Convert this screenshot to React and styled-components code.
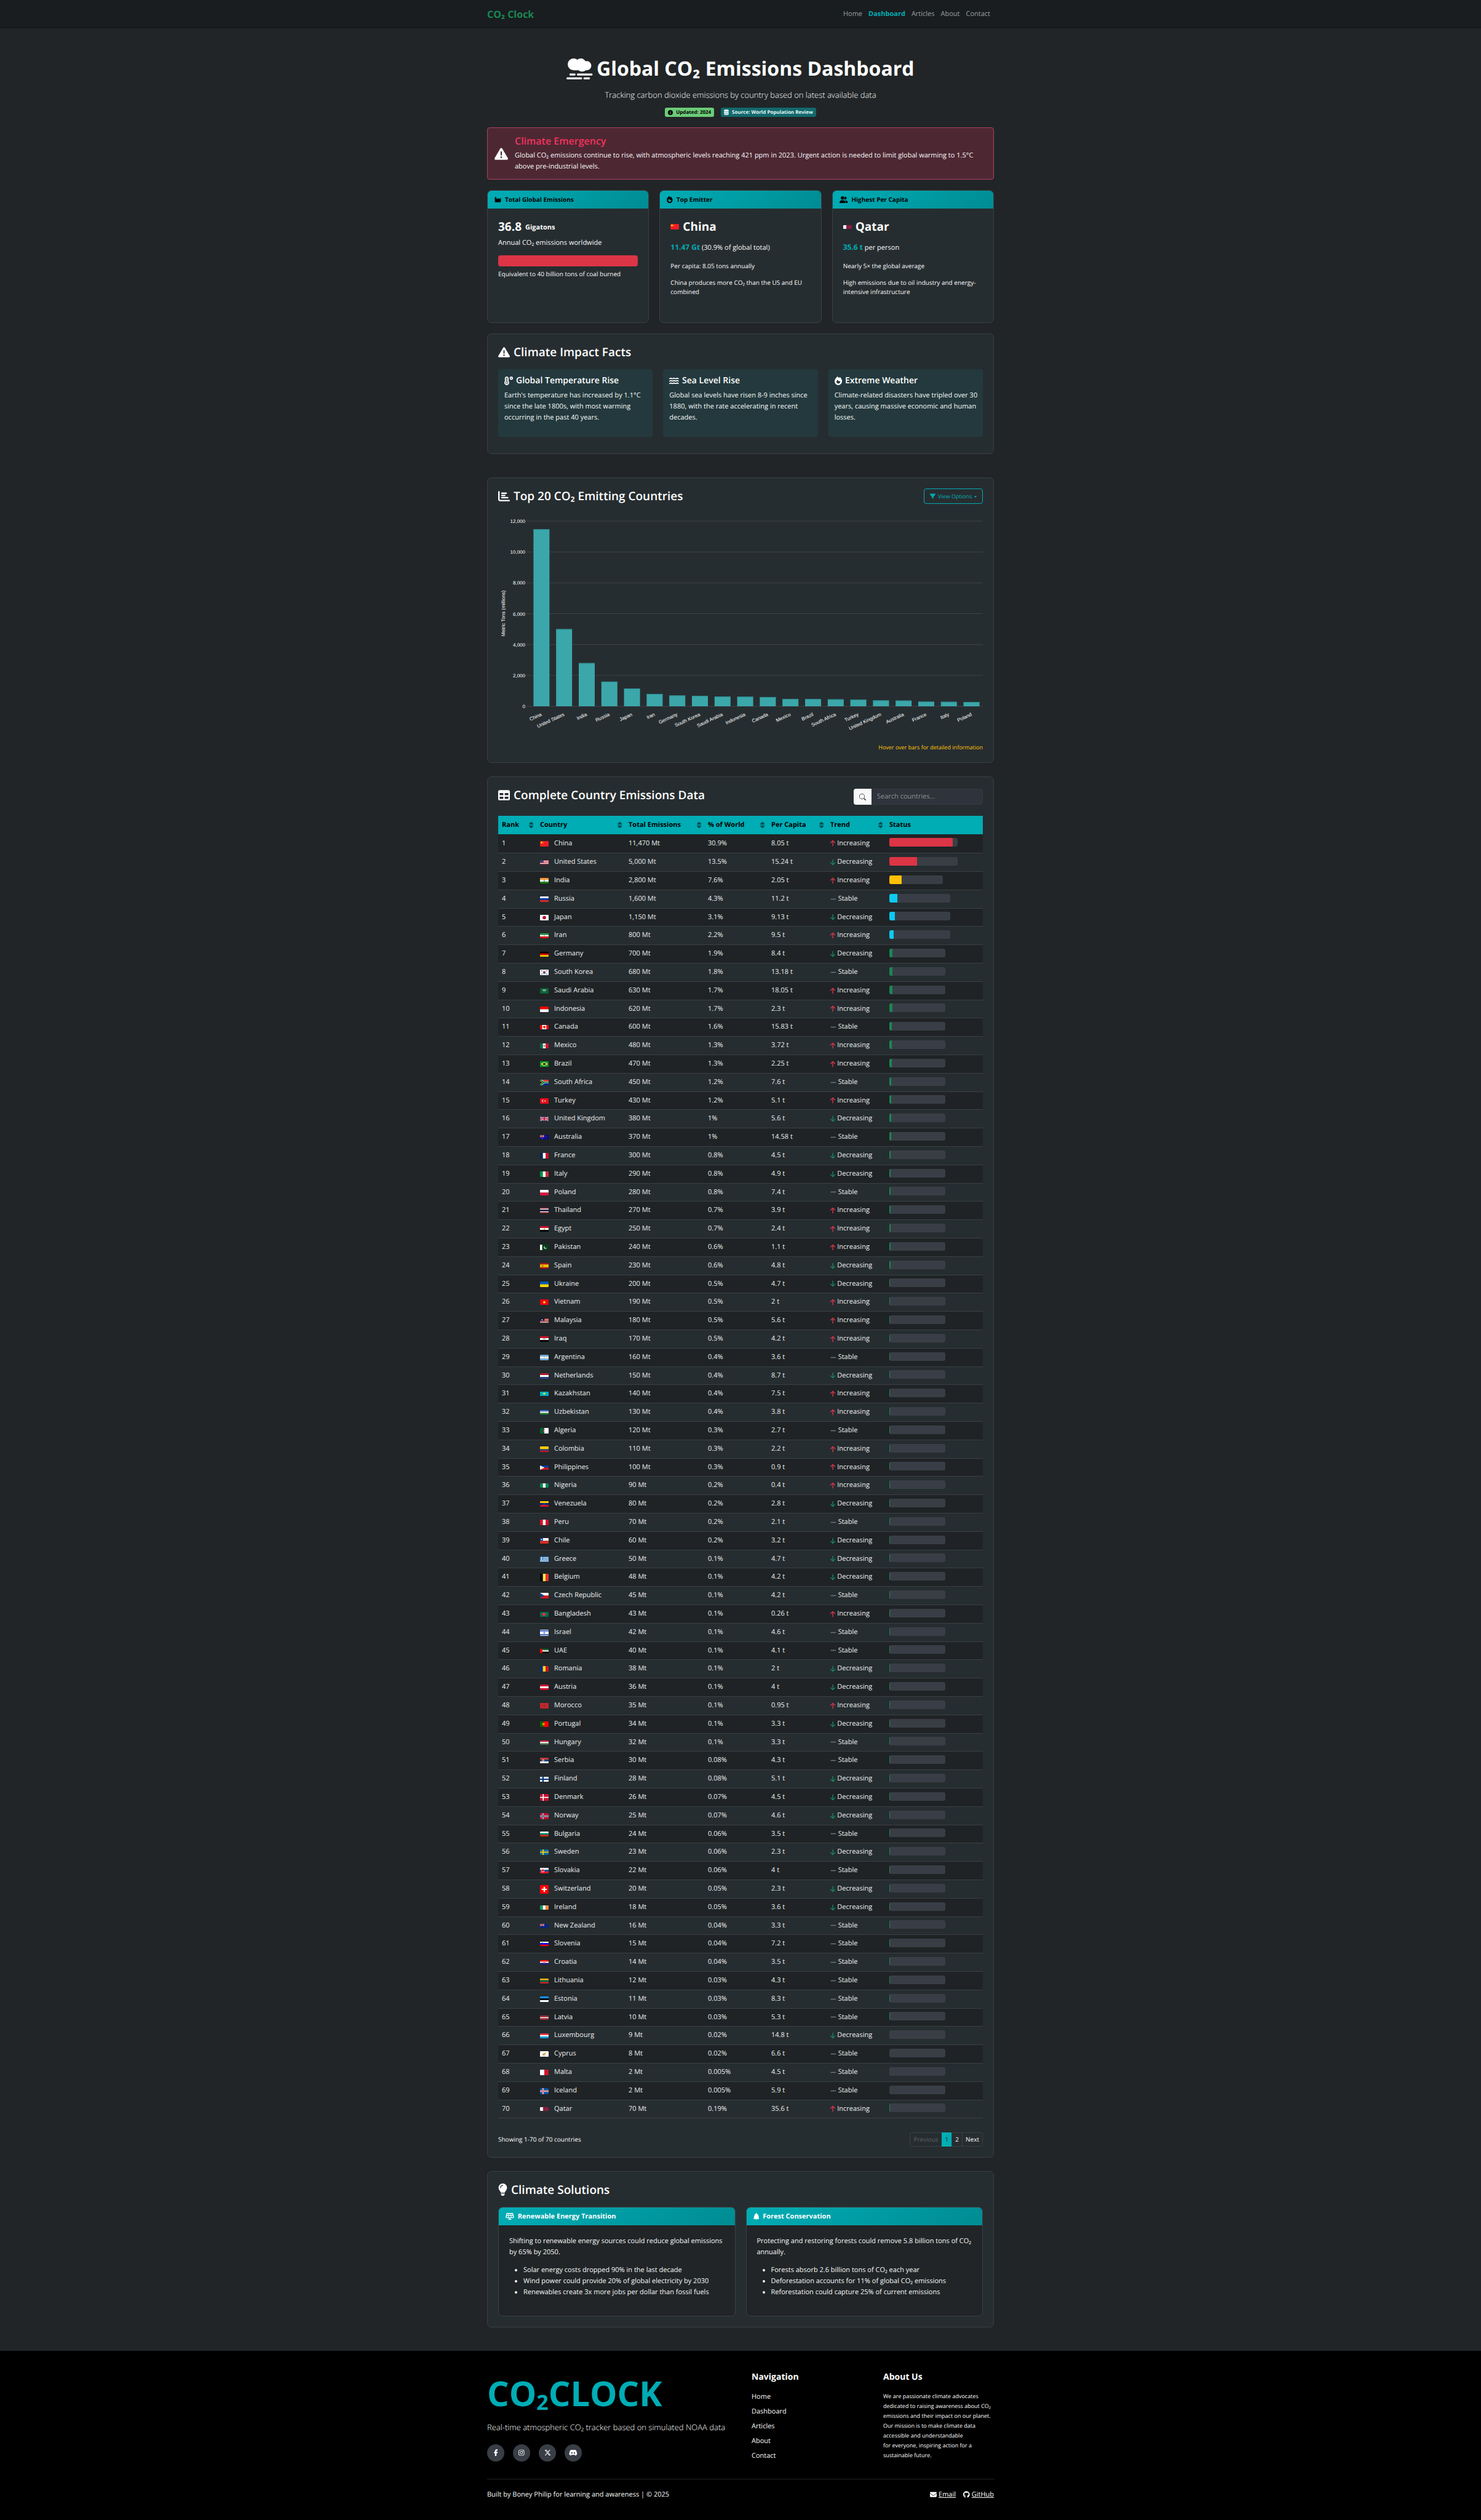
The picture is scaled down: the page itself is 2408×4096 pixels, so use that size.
import React from "react";
import styled, { createGlobalStyle } from "styled-components";
import * as fa from "react-icons/fa6";
import { BsSearch } from "react-icons/bs";

const c = {
  page: "#212527",
  header: "#191d1f",
  panel: "#262d30",
  line: "#3a4043",
  stripe: "#1f2325",
  teal: "#00adb5",
  tealDark: "#008c93",
  text: "#f8f9fa",
  soft: "#eceef0",
  track: "#393e46",
  red: "#dc3545",
  green: "#198754",
  amber: "#ffc107",
  cyan: "#0dcaf0",
  grey: "#6c757d",
};

/* Font Awesome glyphs are 512 units tall; each keeps its own width. */
const glyph = (Icon, units) => styled(Icon)`
  width: calc(1em * ${units} / 512);
  height: 1em;
  font-size: ${(p) => p.size}px;
`;

const Smog = glyph(fa.FaSmog, 640);
const Info = glyph(fa.FaCircleInfo, 512);
const Database = glyph(fa.FaDatabase, 448);
const Warning = glyph(fa.FaTriangleExclamation, 512);
const Industry = glyph(fa.FaIndustry, 512);
const Fire = glyph(fa.FaFire, 448);
const Users = glyph(fa.FaUserGroup, 640);
const Temperature = glyph(fa.FaTemperatureHigh, 512);
const Water = glyph(fa.FaWater, 576);
const ChartBar = glyph(fa.FaChartBar, 512);
const Filter = glyph(fa.FaFilter, 512);
const TableIcon = glyph(fa.FaTable, 512);
const Bulb = glyph(fa.FaLightbulb, 384);
const Solar = glyph(fa.FaSolarPanel, 640);
const Tree = glyph(fa.FaTree, 448);
const Facebook = glyph(fa.FaFacebookF, 320);
const Instagram = glyph(fa.FaInstagram, 448);
const XLogo = glyph(fa.FaXTwitter, 512);
const Discord = glyph(fa.FaDiscord, 640);
const Envelope = glyph(fa.FaEnvelope, 512);
const Github = glyph(fa.FaGithub, 496);
const Sort = glyph(fa.FaSort, 320);
const ArrowUp = glyph(fa.FaArrowUp, 384);
const ArrowDown = glyph(fa.FaArrowDown, 384);
const Minus = glyph(fa.FaMinus, 448);
const Caret = glyph(fa.FaCaretDown, 320);

const GlobalStyle = createGlobalStyle`
  *, *::before, *::after { box-sizing: border-box; }
  body {
    margin: 0;
    background: ${c.page};
    color: ${c.text};
    font-family: "Open Sans", "Noto Sans", sans-serif;
    font-size: 11px;
    line-height: 18px;
    text-rendering: geometricPrecision;
  }
  h1, h2, h3, h4, p, ul { margin: 0; padding: 0; }
  button, input { font: inherit; color: inherit; text-rendering: inherit; }
  svg { flex: none; }
`;

const Page = styled.div`
  display: flex;
  flex-direction: column;
  min-height: 100vh;
`;

const Container = styled.div`
  width: 100%;
  max-width: 824px;
  margin: 0 auto;
`;

/* ---------- header ---------- */

const TopBar = styled.header`
  background: ${c.header};
  border-bottom: 1px solid #121517;
`;

const TopBarInner = styled(Container)`
  display: flex;
  align-items: center;
  justify-content: space-between;
  min-height: 45px;
`;

const Brand = styled.a`
  color: ${c.green};
  font-size: 16px;
  font-weight: 700;
  text-decoration: none;
`;

const MainNav = styled.nav`
  display: flex;
  gap: 10px;
  padding-right: 6px;
`;

const NavLink = styled.a`
  color: ${(p) => (p.$active ? c.teal : "#9b9fa2")};
  font-weight: ${(p) => (p.$active ? 700 : 400)};
  text-decoration: none;
`;

/* ---------- hero ---------- */

const Hero = styled.section`
  display: flex;
  flex-direction: column;
  align-items: center;
  padding: 46px 0 17px;
`;

const HeroTitle = styled.h1`
  display: flex;
  align-items: center;
  gap: 6px;
  color: #fff;
  font-size: 32px;
  font-weight: 700;
  line-height: 40px;
`;

const Lead = styled.p`
  font-size: 13px;
  font-weight: 300;
  line-height: 22px;
`;

const HeroLead = styled(Lead)`
  margin: 11px 0 10px;
`;

const Badges = styled.div`
  display: flex;
  gap: 11px;
`;

const Badge = styled.span`
  display: flex;
  align-items: center;
  gap: 5px;
  padding: 0 5px;
  border-radius: 3px;
  background: ${(p) => (p.$tone === "green" ? "#6ccb77" : "#12696d")};
  color: ${(p) => (p.$tone === "green" ? "#000" : "#e4f4f5")};
  font-size: 8px;
  font-weight: 700;
  line-height: 15px;
`;

const Alert = styled.section`
  display: flex;
  align-items: center;
  gap: 11px;
  padding: 11px;
  border: 1px solid #b04060;
  border-radius: 4px;
  background: #4d2833;
`;

const AlertTitle = styled.h2`
  margin-bottom: 5px;
  color: #f5325f;
  font-size: 16px;
  font-weight: 600;
  line-height: 20px;
`;

/* ---------- cards ---------- */

const Grid = styled.div`
  display: grid;
  grid-template-columns: repeat(${(p) => p.$cols}, 1fr);
  gap: 17px;
`;

const StatGrid = styled(Grid)`
  margin: 17px 0;
`;

const Card = styled.article`
  overflow: hidden;
  border: 1px solid ${c.line};
  border-radius: 7px;
  background: ${(p) => (p.$dark ? c.page : c.panel)};
`;

const CardHead = styled.h3`
  display: flex;
  align-items: center;
  gap: 6px;
  padding: 0 11px;
  background: linear-gradient(135deg, ${c.teal}, ${c.tealDark});
  color: ${(p) => (p.$light ? "#fff" : "#000")};
  font-size: ${(p) => (p.$light ? 11 : 10)}px;
  font-weight: 700;
  line-height: 29px;
`;

const CardBody = styled.div`
  padding: 17px 17px 29px;
`;

const StatBody = styled(CardBody)`
  min-height: 185px;
`;

const StatValue = styled.h4`
  display: flex;
  align-items: center;
  gap: 6px;
  color: #fff;
  font-size: 19px;
  font-weight: 700;
  line-height: 24px;
`;

const Unit = styled.small`
  align-self: flex-end;
  font-size: 11px;
  line-height: 20px;
`;

const Plain = styled.p`
  margin-top: ${(p) => p.$top || 0}px;
`;

const Highlight = styled.strong`
  color: ${c.teal};
  font-size: 12px;
`;

const Small = styled.p`
  margin-top: ${(p) => p.$top || 0}px;
  font-size: 10px;
  line-height: 15px;
`;

const ChartHint = styled.p`
  margin-top: 8px;
  color: ${c.amber};
  font-size: 9px;
  line-height: 15px;
  text-align: right;
`;

const RedBar = styled.div`
  height: 18px;
  margin-top: 11px;
  border-radius: 4px;
  background: ${c.red};
`;

/* ---------- panels ---------- */

const Panel = styled.section`
  margin-bottom: ${(p) => p.$after || 22}px;
  padding: 17px;
  border: 1px solid ${c.line};
  border-radius: 7px;
  background: ${c.panel};
`;

const FactsPanel = styled(Panel)`
  padding-bottom: 27px;
`;

const PanelTitle = styled.h2`
  display: flex;
  align-items: center;
  gap: 6px;
  color: #fff;
  font-size: 19px;
  font-weight: 600;
  line-height: 24px;
`;

const PanelHead = styled.div`
  display: flex;
  justify-content: space-between;
  align-items: flex-start;
  margin-bottom: ${(p) => p.$after || 16}px;
`;

const Fact = styled.article`
  padding: 10px 4px 22px 10px;
  border-radius: 4px;
  background: #23393d;
`;

const FactTitle = styled.h3`
  display: flex;
  align-items: center;
  gap: 5px;
  margin-bottom: 6px;
  color: #fff;
  font-size: 14px;
  font-weight: 600;
  line-height: 18px;
`;

/* ---------- chart ---------- */

const OptionsButton = styled.button`
  display: flex;
  align-items: center;
  gap: 4px;
  height: 25px;
  padding: 0 9px;
  border: 1px solid ${c.teal};
  border-radius: 4px;
  background: transparent;
  color: ${c.teal};
  font-size: 9px;
`;

const ChartSvg = styled.svg`
  display: block;
  width: 100%;
  height: auto;
  font-family: "Liberation Sans", Arial, sans-serif;
  font-size: 8px;
  fill: #fff;
`;

/* ---------- table ---------- */

const Search = styled.form`
  display: flex;
  width: 210px;
  height: 26px;
  margin-top: 2px;
  border-radius: 4px;
  overflow: hidden;
`;

const SearchButton = styled.button`
  display: flex;
  align-items: center;
  justify-content: center;
  width: 29px;
  padding: 0;
  border: 0;
  background: #f8f9fa;
  color: #212529;
`;

const SearchInput = styled.input`
  flex: 1;
  min-width: 0;
  padding: 0 9px;
  border: 1px solid #363b43;
  border-left: 0;
  border-radius: 0 4px 4px 0;
  background: #2f333b;
  color: ${c.text};
  &::placeholder { color: #8a8f95; opacity: 1; }
`;

const Table = styled.table`
  width: 100%;
  border-collapse: collapse;
  table-layout: fixed;
`;

const Col = styled.col`
  width: ${(p) => (p.$w ? `${p.$w}px` : "auto")};
`;

const Th = styled.th`
  height: 30px;
  padding: 0 5px 0 6px;
  background: ${c.teal};
  color: #000;
  font-weight: 700;
  text-align: left;
`;

const SortButton = styled.button`
  display: flex;
  align-items: center;
  justify-content: space-between;
  width: 100%;
  padding: 0;
  border: 0;
  background: none;
  font-weight: 700;
  font-size: 11px;
  svg { opacity: 0.55; }
`;

const HeadLabel = styled.span`
  font-size: 11px;
`;

const Row = styled.tr`
  height: 30px;
  border-bottom: 1px solid ${c.line};
  color: ${c.soft};
  &:nth-child(odd) { background: ${c.stripe}; }
  &:nth-child(5n) { height: 29px; }
`;

const Td = styled.td`
  padding: 0 6px;
  white-space: nowrap;
`;

const CountryCell = styled.span`
  display: flex;
  align-items: center;
  gap: 9px;
`;

const Trend = styled.span`
  display: flex;
  align-items: center;
  gap: 3px;
  svg { color: ${(p) => p.$color}; }
`;

const Track = styled.div`
  width: ${(p) => p.$w}px;
  height: 14px;
  margin-bottom: 3px;
  overflow: hidden;
  border-radius: 3px;
  background: ${c.track};
`;

const Fill = styled.div`
  height: 100%;
  background: ${(p) => p.$color};
`;

const FlagSvg = styled.svg`
  display: block;
  width: 14px;
  margin-top: 1px;
  border-radius: 1px;
`;

const PagerRow = styled.div`
  display: flex;
  align-items: center;
  justify-content: space-between;
  margin-top: 23px;
`;

const Pager = styled.nav`
  display: flex;
  height: 23px;
`;

const PageButton = styled.button`
  padding: 0 5px;
  margin-left: -1px;
  border: 1px solid ${(p) => (p.$active ? c.teal : c.line)};
  border-radius: ${(p) => p.$round || "0"};
  background: ${(p) => (p.$active ? c.teal : "transparent")};
  color: ${(p) => (p.$active ? "#10363a" : p.disabled ? "#5a6064" : c.text)};
  font-size: 10px;
`;

const Bullets = styled.ul`
  margin-top: 11px;
  padding-left: 23px;
`;

/* ---------- footer ---------- */

const Footer = styled.footer`
  flex: 1;
  background: #000;
  padding: 34px 0 28px;
`;

const FooterGrid = styled(Container)`
  display: grid;
  grid-template-columns: 430px 214px 1fr;
  padding-bottom: 28px;
`;

const Logo = styled.div`
  color: ${c.teal};
  font-size: 56px;
  font-weight: 700;
  line-height: 70px;
  margin-bottom: 9px;
  sub {
    font-size: 34px;
    line-height: 0;
    vertical-align: -6px;
  }
`;

const Socials = styled.div`
  display: flex;
  gap: 14px;
  margin-top: 17px;
`;

const Social = styled.a`
  display: flex;
  align-items: center;
  justify-content: center;
  width: 28px;
  height: 28px;
  border-radius: 50%;
  background: ${c.track};
  color: #fff;
`;

const FooterTitle = styled.h2`
  margin-bottom: 14px;
  color: #fff;
  font-size: 14px;
  font-weight: 700;
  line-height: 18px;
`;

const FooterLinks = styled.nav`
  display: flex;
  flex-direction: column;
  align-items: flex-start;
  gap: 6px;
`;

const FooterLink = styled.a`
  color: ${c.text};
  text-decoration: none;
`;

const AboutText = styled.p`
  font-size: 9px;
  line-height: 16px;
  text-wrap: pretty;
`;

const FooterBottom = styled(Container)`
  display: flex;
  justify-content: space-between;
  padding-top: 16px;
  border-top: 1px solid #1d2123;
`;

const ContactLinks = styled.div`
  display: flex;
  gap: 12px;
`;

const ContactLink = styled.a`
  color: #fff;
  display: flex;
  align-items: center;
  gap: 3px;
`;

/* ---------- flags, drawn on a 60 x 40 field ---------- */

const H = (...cols) =>
  cols.map((f, i) => (
    <rect key={i} y={(40 / cols.length) * i} width="60" height={40 / cols.length + 0.3} fill={f} />
  ));
const V = (...cols) =>
  cols.map((f, i) => (
    <rect key={i} x={(60 / cols.length) * i} height="40" width={60 / cols.length + 0.3} fill={f} />
  ));
const R = (f, x = 0, y = 0, w = 60, h = 40) => <rect x={x} y={y} width={w} height={h} fill={f} />;
const D = (f, cx, cy, r) => <circle cx={cx} cy={cy} r={r} fill={f} />;
const P = (f, d) => <path d={d} fill={f} />;
const Nordic = ({ bg, a, b }) => (
  <>
    {R(bg)}
    {R(a, 16, 0, 10, 40)}
    {R(a, 0, 15, 60, 10)}
    {b && R(b, 19, 0, 4, 40)}
    {b && R(b, 0, 18, 60, 4)}
  </>
);
const Jack = ({ sx = 1 }) => (
  <g transform={`scale(${sx})`}>
    {R("#012169")}
    <path d="M0 0L60 40M60 0L0 40" stroke="#fff" strokeWidth="8" />
    <path d="M0 0L60 40M60 0L0 40" stroke="#c8102e" strokeWidth="3" />
    <path d="M30 0V40M0 20H60" stroke="#fff" strokeWidth="13" />
    <path d="M30 0V40M0 20H60" stroke="#c8102e" strokeWidth="8" />
  </g>
);

const flags = {
  China: [9, <>{R("#ee1c25")}{D("#ff0", 11, 11, 6)}{D("#ff0", 22, 5, 2)}{D("#ff0", 25, 11, 2)}{D("#ff0", 22, 18, 2)}</>],
  "United States": [7, <>{H("#b22234", "#fff", "#b22234", "#fff", "#b22234", "#fff", "#b22234")}{R("#3c3b6e", 0, 0, 25, 22)}</>],
  India: [9, <>{H("#ff9932", "#fff", "#128807")}<circle cx="30" cy="20" r="5" fill="none" stroke="#008" strokeWidth="2" /></>],
  Russia: [9, H("#fff", "#0039a6", "#d52b1e")],
  Japan: [9, <>{R("#fff")}{D("#bc002d", 30, 20, 12)}</>],
  Iran: [8, <>{H("#239f40", "#fff", "#da0000")}{D("#da6060", 30, 20, 4)}</>],
  Germany: [8, H("#000", "#d00", "#ffce00")],
  "South Korea": [9, <>{R("#fff")}{P("#cd2e3a", "M20 20a10 10 0 0 1 20 0z")}{P("#0047a0", "M20 20a10 10 0 0 0 20 0z")}{R("#333", 9, 6, 7, 5)}{R("#333", 44, 6, 7, 5)}{R("#333", 9, 29, 7, 5)}{R("#333", 44, 29, 7, 5)}</>],
  "Saudi Arabia": [9, <>{R("#0b6039")}{R("#cfe3d8", 17, 12, 26, 6)}{R("#cfe3d8", 20, 25, 20, 2)}</>],
  Indonesia: [9, H("#f00", "#fff")],
  Canada: [7, <>{V("#f00", "#fff", "#fff", "#f00")}{P("#f00", "M30 6l5 8 6-1-2 8-6 5v7h-6v-7l-6-5-2-8 6 1z")}</>],
  Mexico: [8, <>{V("#006847", "#fff", "#ce1126")}{D("#8c6b3f", 30, 20, 6)}</>],
  Brazil: [9, <>{R("#009b3a")}{P("#fedf00", "M30 4L55 20 30 36 5 20z")}{D("#002776", 30, 20, 9)}</>],
  "South Africa": [9, <>{R("#de3831")}{R("#002395", 0, 22, 60, 18)}{P("#fff", "M0 0h12l20 13h28v14H32L12 40H0z")}{P("#007a4d", "M0 0h6l24 16h30v8H30L6 40H0z")}{P("#ffb612", "M0 6l20 14L0 34z")}{P("#000", "M0 10l14 10L0 30z")}</>],
  Turkey: [9, <>{R("#e30a17")}{D("#fff", 22, 20, 9)}{D("#e30a17", 25, 20, 7)}{D("#fff", 36, 20, 4)}</>],
  "United Kingdom": [7, <Jack />],
  Australia: [7, <>{R("#00008b")}<Jack sx={0.5} />{D("#fff", 15, 31, 3)}{D("#fff", 46, 8, 2)}{D("#fff", 53, 17, 2)}{D("#fff", 39, 18, 2)}{D("#fff", 46, 33, 2)}</>],
  France: [9, V("#002654", "#fff", "#ce1126")],
  Italy: [9, V("#009246", "#fff", "#ce2b37")],
  Poland: [9, H("#fff", "#dc143c")],
  Thailand: [9, H("#a51931", "#f4f5f8", "#2d2a4a", "#2d2a4a", "#f4f5f8", "#a51931")],
  Egypt: [9, <>{H("#ce1126", "#fff", "#000")}{D("#c09300", 30, 20, 4)}</>],
  Pakistan: [9, <>{R("#01411c")}{R("#fff", 0, 0, 15, 40)}{D("#fff", 37, 20, 10)}{D("#01411c", 40, 17, 9)}</>],
  Spain: [9, <>{R("#aa151b")}{R("#f1bf00", 0, 10, 60, 20)}{D("#ad6030", 18, 20, 6)}</>],
  Ukraine: [9, H("#005bbb", "#ffd500")],
  Vietnam: [9, <>{R("#ec0015")}{P("#ff0", "M30 8l3 9h9l-7 6 3 9-8-6-8 6 3-9-7-6h9z")}</>],
  Malaysia: [7, <>{H("#cc0001", "#fff", "#cc0001", "#fff", "#cc0001", "#fff", "#cc0001", "#fff")}{R("#010066", 0, 0, 31, 22)}{D("#fc0", 15, 11, 6)}</>],
  Iraq: [9, <>{H("#ce1126", "#fff", "#000")}{R("#5a9a74", 20, 17, 20, 5)}</>],
  Argentina: [9, <>{H("#74acdf", "#fff", "#74acdf")}{D("#f6b40e", 30, 20, 4)}</>],
  Netherlands: [9, H("#ae1c28", "#fff", "#21468b")],
  Kazakhstan: [7, <>{R("#00abc2")}{D("#ffec2d", 30, 18, 8)}</>],
  Uzbekistan: [7, H("#3a6fd0", "#fff", "#1f8b3a")],
  Algeria: [9, <>{V("#006233", "#fff")}{D("#d21034", 30, 20, 9)}{D("#fff", 34, 20, 7)}</>],
  Colombia: [9, <>{R("#ffcd00")}{R("#003087", 0, 20, 60, 10)}{R("#c8102e", 0, 30, 60, 10)}</>],
  Philippines: [7, <>{H("#0038a8", "#ce1126")}{P("#fff", "M0 0l32 20L0 40z")}{D("#fcd116", 10, 20, 5)}</>],
  Nigeria: [7, V("#008751", "#fff", "#008751")],
  Venezuela: [9, <>{H("#fc0", "#00247d", "#cf142b")}<path d="M22 24a9 8 0 0 1 16 0" fill="none" stroke="#fff" strokeWidth="2" strokeDasharray="2 2" /></>],
  Peru: [9, V("#d91023", "#fff", "#d91023")],
  Chile: [9, <>{H("#fff", "#d52b1e")}{R("#0039a6", 0, 0, 20, 20)}{D("#fff", 10, 10, 4)}</>],
  Greece: [9, <>{H("#0d5eaf", "#fff", "#0d5eaf", "#fff", "#0d5eaf", "#fff", "#0d5eaf", "#fff", "#0d5eaf")}{R("#0d5eaf", 0, 0, 22, 22)}{R("#fff", 9, 0, 4, 22)}{R("#fff", 0, 9, 22, 4)}</>],
  Belgium: [12, V("#000", "#fae042", "#ed2939")],
  "Czech Republic": [9, <>{H("#fff", "#d7141a")}{P("#11457e", "M0 0l30 20L0 40z")}</>],
  Bangladesh: [8, <>{R("#006a4e")}{D("#f42a41", 27, 20, 12)}</>],
  Israel: [10, <>{R("#fff")}{R("#0038b8", 0, 4, 60, 6)}{R("#0038b8", 0, 30, 60, 6)}<path d="M30 13l6 10H24zM30 27l-6-10h12z" fill="none" stroke="#0038b8" strokeWidth="1.5" /></>],
  UAE: [7, <>{H("#00732f", "#fff", "#000")}{R("#f00", 0, 0, 16, 40)}</>],
  Romania: [9, V("#002b7f", "#fcd116", "#ce1126")],
  Austria: [9, H("#c8102e", "#fff", "#c8102e")],
  Morocco: [9, <>{R("#c1272d")}<path d="M30 12l5 15-13-9h16l-13 9z" fill="none" stroke="#5a4a2d" strokeWidth="2" /></>],
  Portugal: [9, <>{R("#f00")}{R("#060", 0, 0, 24, 40)}{D("#ff0", 24, 20, 8)}{D("#f00", 24, 20, 4)}</>],
  Hungary: [7, H("#cd2a3e", "#fff", "#436f4d")],
  Serbia: [9, <>{H("#c6363c", "#0c4076", "#fff")}{D("#edc0b0", 22, 19, 8)}{D("#c6363c", 22, 19, 4)}</>],
  Finland: [8, <Nordic bg="#fff" a="#003580" />],
  Denmark: [11, <>{R("#c8102e")}{R("#fff", 19, 0, 7, 40)}{R("#fff", 0, 17, 60, 6)}</>],
  Norway: [10, <Nordic bg="#ba0c2f" a="#fff" b="#00205b" />],
  Bulgaria: [8, H("#fff", "#00966e", "#d62612")],
  Sweden: [9, <>{R("#006aa7")}{R("#fecc00", 18, 0, 8, 40)}{R("#fecc00", 0, 16, 60, 8)}</>],
  Slovakia: [9, <>{H("#fff", "#0b4ea2", "#ee1c25")}{D("#fff", 20, 20, 11)}{D("#ee1c25", 20, 19, 9)}</>],
  Switzerland: [14, <>{R("#f00")}{R("#fff", 25, 8, 10, 24)}{R("#fff", 12, 17, 36, 6)}</>],
  Ireland: [7, V("#169b62", "#fff", "#ff883e")],
  "New Zealand": [7, <>{R("#00247d")}<Jack sx={0.5} />{D("#cc142b", 46, 8, 2)}{D("#cc142b", 53, 17, 2)}{D("#cc142b", 39, 18, 2)}{D("#cc142b", 46, 33, 3)}</>],
  Slovenia: [7, <>{H("#fff", "#00f", "#f00")}{D("#005da4", 16, 13, 6)}</>],
  Croatia: [7, <>{H("#f00", "#fff", "#171796")}{R("#f08080", 22, 8, 16, 20)}</>],
  Lithuania: [8, H("#fdb913", "#006a44", "#c1272d")],
  Estonia: [9, H("#1791ff", "#000", "#fff")],
  Latvia: [7, <>{R("#9e3039")}{R("#fff", 0, 16, 60, 8)}</>],
  Luxembourg: [8, H("#ed2939", "#fff", "#00a1de")],
  Cyprus: [9, <>{R("#fff")}{P("#d57800", "M14 20l14-2 16-9-8 14-12 5z")}<path d="M18 31q12 5 24 0" fill="none" stroke="#4e5b31" strokeWidth="2" /></>],
  Malta: [9, V("#fff", "#cf142b")],
  Iceland: [10, <Nordic bg="#02529c" a="#fff" b="#dc1e35" />],
  Qatar: [6, <>{R("#8d1b3d")}{P("#fff", "M0 0h18l6 4-6 4 6 4-6 4 6 4-6 4 6 4-6 4 6 4-6 4H0z")}</>],
};

function Flag({ name }) {
  const [height, art] = flags[name];
  return (
    <FlagSvg viewBox="0 0 60 40" height={height} preserveAspectRatio="none" role="img" aria-label={name}>
      {art}
    </FlagSvg>
  );
}

/* ---------- data: country, Mt, % of world, t per person, trend ---------- */

const countries = `China|11,470|30.9|8.05|u
United States|5,000|13.5|15.24|d
India|2,800|7.6|2.05|u
Russia|1,600|4.3|11.2|s
Japan|1,150|3.1|9.13|d
Iran|800|2.2|9.5|u
Germany|700|1.9|8.4|d
South Korea|680|1.8|13.18|s
Saudi Arabia|630|1.7|18.05|u
Indonesia|620|1.7|2.3|u
Canada|600|1.6|15.83|s
Mexico|480|1.3|3.72|u
Brazil|470|1.3|2.25|u
South Africa|450|1.2|7.6|s
Turkey|430|1.2|5.1|u
United Kingdom|380|1|5.6|d
Australia|370|1|14.58|s
France|300|0.8|4.5|d
Italy|290|0.8|4.9|d
Poland|280|0.8|7.4|s
Thailand|270|0.7|3.9|u
Egypt|250|0.7|2.4|u
Pakistan|240|0.6|1.1|u
Spain|230|0.6|4.8|d
Ukraine|200|0.5|4.7|d
Vietnam|190|0.5|2|u
Malaysia|180|0.5|5.6|u
Iraq|170|0.5|4.2|u
Argentina|160|0.4|3.6|s
Netherlands|150|0.4|8.7|d
Kazakhstan|140|0.4|7.5|u
Uzbekistan|130|0.4|3.8|u
Algeria|120|0.3|2.7|s
Colombia|110|0.3|2.2|u
Philippines|100|0.3|0.9|u
Nigeria|90|0.2|0.4|u
Venezuela|80|0.2|2.8|d
Peru|70|0.2|2.1|s
Chile|60|0.2|3.2|d
Greece|50|0.1|4.7|d
Belgium|48|0.1|4.2|d
Czech Republic|45|0.1|4.2|s
Bangladesh|43|0.1|0.26|u
Israel|42|0.1|4.6|s
UAE|40|0.1|4.1|s
Romania|38|0.1|2|d
Austria|36|0.1|4|d
Morocco|35|0.1|0.95|u
Portugal|34|0.1|3.3|d
Hungary|32|0.1|3.3|s
Serbia|30|0.08|4.3|s
Finland|28|0.08|5.1|d
Denmark|26|0.07|4.5|d
Norway|25|0.07|4.6|d
Bulgaria|24|0.06|3.5|s
Sweden|23|0.06|2.3|d
Slovakia|22|0.06|4|s
Switzerland|20|0.05|2.3|d
Ireland|18|0.05|3.6|d
New Zealand|16|0.04|3.3|s
Slovenia|15|0.04|7.2|s
Croatia|14|0.04|3.5|s
Lithuania|12|0.03|4.3|s
Estonia|11|0.03|8.3|s
Latvia|10|0.03|5.3|s
Luxembourg|9|0.02|14.8|d
Cyprus|8|0.02|6.6|s
Malta|2|0.005|4.5|s
Iceland|2|0.005|5.9|s
Qatar|70|0.19|35.6|u`
  .split("\n")
  .map((line) => {
    const [name, mt, share, capita, trend] = line.split("|");
    return { name, mt, share, capita, trend };
  });

const trends = {
  u: { label: "Increasing", color: c.red, Icon: ArrowUp },
  d: { label: "Decreasing", color: c.green, Icon: ArrowDown },
  s: { label: "Stable", color: c.grey, Icon: Minus },
};

function level(share) {
  if (share >= 10) return { w: 111, color: c.red };
  if (share >= 5) return { w: 87, color: c.amber };
  if (share >= 2) return { w: 99, color: c.cyan };
  return { w: 91, color: c.green };
}

const columns = [
  ["Rank", 62], ["Country", 144], ["Total Emissions", 129], ["% of World", 103],
  ["Per Capita", 96], ["Trend", 96], ["Status", 0],
];

/* ---------- chart ---------- */

const plot = { left: 52, right: 788, top: 12, bottom: 313, max: 12000 };
const yOf = (v) => plot.bottom - ((plot.bottom - plot.top) * v) / plot.max;

function EmissionsChart() {
  const data = countries.slice(0, 20).map((d) => ({ name: d.name, value: Number(d.mt.replace(",", "")) }));
  const step = (plot.right - plot.left) / data.length;
  return (
    <ChartSvg viewBox="0 0 788 364" role="img" aria-label="Emissions of the top 20 countries">
      {[0, 2000, 4000, 6000, 8000, 10000, 12000].map((v) => (
        <g key={v}>
          <line x1="46" x2={plot.right} y1={yOf(v)} y2={yOf(v)} stroke="#3d4346" />
          <text x="44" y={yOf(v) + 3} textAnchor="end">{v.toLocaleString("en-US")}</text>
        </g>
      ))}
      <text transform="translate(11 162) rotate(-90)" textAnchor="middle">Metric Tons (millions)</text>
      {data.map((d, i) => {
        const mid = plot.left + step * (i + 0.5);
        const y = yOf(d.value);
        return (
          <g key={d.name}>
            <rect x={mid - 13} y={y} width="26" height={plot.bottom - y} fill="#3ba7aa" />
            <rect x={mid - 13} y={y} width="26" height="1" fill="#2c9095" />
            <text transform={`translate(${mid + 1} 328) rotate(-25)`} textAnchor="end">{d.name}</text>
          </g>
        );
      })}
    </ChartSvg>
  );
}

const navItems = ["Home", "Dashboard", "Articles", "About", "Contact"];

export default function App() {
  return (
    <Page>
      <GlobalStyle />
      <TopBar>
        <TopBarInner>
          <Brand href="#">CO₂ Clock</Brand>
          <MainNav>
            {navItems.map((n) => (
              <NavLink key={n} href="#" $active={n === "Dashboard"}>{n}</NavLink>
            ))}
          </MainNav>
        </TopBarInner>
      </TopBar>

      <Container as="main">
        <Hero>
          <HeroTitle><Smog size={34} /> Global CO₂ Emissions Dashboard</HeroTitle>
          <HeroLead>Tracking carbon dioxide emissions by country based on latest available data</HeroLead>
          <Badges>
            <Badge $tone="green"><Info size={8} /> Updated: 2024</Badge>
            <Badge><Database size={9} /> Source: World Population Review</Badge>
          </Badges>
        </Hero>

        <Alert>
          <Warning size={22} />
          <div>
            <AlertTitle>Climate Emergency</AlertTitle>
            <p>
              Global CO₂ emissions continue to rise, with atmospheric levels reaching 421 ppm in 2023. Urgent action is
              needed to limit global warming to 1.5°C above pre-industrial levels.
            </p>
          </div>
        </Alert>

        <StatGrid $cols={3}>
          <Card>
            <CardHead><Industry size={11} /> Total Global Emissions</CardHead>
            <StatBody>
              <StatValue>36.8 <Unit>Gigatons</Unit></StatValue>
              <Plain $top={6}>Annual CO₂ emissions worldwide</Plain>
              <RedBar />
              <Small $top={5}>Equivalent to 40 billion tons of coal burned</Small>
            </StatBody>
          </Card>
          <Card>
            <CardHead><Fire size={11} /> Top Emitter</CardHead>
            <StatBody>
              <StatValue><Flag name="China" /> China</StatValue>
              <Plain $top={13}><Highlight>11.47 Gt</Highlight> (30.9% of global total)</Plain>
              <Small $top={13}>Per capita: 8.05 tons annually</Small>
              <Small $top={12}>China produces more CO₂ than the US and EU combined</Small>
            </StatBody>
          </Card>
          <Card>
            <CardHead><Users size={11} /> Highest Per Capita</CardHead>
            <StatBody>
              <StatValue><Flag name="Qatar" /> Qatar</StatValue>
              <Plain $top={13}><Highlight>35.6 t</Highlight> per person</Plain>
              <Small $top={13}>Nearly 5× the global average</Small>
              <Small $top={12}>High emissions due to oil industry and energy-intensive infrastructure</Small>
            </StatBody>
          </Card>
        </StatGrid>

        <FactsPanel $after={38}>
          <PanelHead>
            <PanelTitle><Warning size={19} /> Climate Impact Facts</PanelTitle>
          </PanelHead>
          <Grid $cols={3}>
            <Fact>
              <FactTitle><Temperature size={14} /> Global Temperature Rise</FactTitle>
              <p>Earth's temperature has increased by 1.1°C since the late 1800s, with most warming occurring in the past 40 years.</p>
            </Fact>
            <Fact>
              <FactTitle><Water size={14} /> Sea Level Rise</FactTitle>
              <p>Global sea levels have risen 8-9 inches since 1880, with the rate accelerating in recent decades.</p>
            </Fact>
            <Fact>
              <FactTitle><Fire size={14} /> Extreme Weather</FactTitle>
              <p>Climate-related disasters have tripled over 30 years, causing massive economic and human losses.</p>
            </Fact>
          </Grid>
        </FactsPanel>

        <Panel>
          <PanelHead>
            <PanelTitle><ChartBar size={19} /> Top 20 CO₂ Emitting Countries</PanelTitle>
            <OptionsButton type="button"><Filter size={9} /> View Options <Caret size={6} /></OptionsButton>
          </PanelHead>
          <EmissionsChart />
          <ChartHint>Hover over bars for detailed information</ChartHint>
        </Panel>

        <Panel>
          <PanelHead $after={18}>
            <PanelTitle><TableIcon size={19} /> Complete Country Emissions Data</PanelTitle>
            <Search role="search" onSubmit={(e) => e.preventDefault()}>
              <SearchButton type="submit" aria-label="Search"><BsSearch size={11} /></SearchButton>
              <SearchInput type="text" aria-label="Search countries" placeholder="Search countries..." />
            </Search>
          </PanelHead>
          <Table>
            <colgroup>{columns.map(([n, w]) => <Col key={n} $w={w} />)}</colgroup>
            <thead>
              <tr>
                {columns.map(([n]) => (
                  <Th key={n} scope="col">
                    {n === "Status" ? <HeadLabel>{n}</HeadLabel> : <SortButton type="button">{n} <Sort size={12} /></SortButton>}
                  </Th>
                ))}
              </tr>
            </thead>
            <tbody>
              {countries.map((d, i) => {
                const { label, color, Icon } = trends[d.trend];
                const lv = level(Number(d.share));
                return (
                  <Row key={d.name}>
                    <Td>{i + 1}</Td>
                    <Td><CountryCell><Flag name={d.name} /> {d.name}</CountryCell></Td>
                    <Td>{d.mt} Mt</Td>
                    <Td>{d.share}%</Td>
                    <Td>{d.capita} t</Td>
                    <Td><Trend $color={color}><Icon size={11} /> {label}</Trend></Td>
                    <Td>
                      <Track $w={lv.w} role="progressbar" aria-label={`${d.name} share`} aria-valuenow={Number(d.share)}>
                        <Fill $color={lv.color} style={{ width: `${Number(d.share) * 3}%` }} />
                      </Track>
                    </Td>
                  </Row>
                );
              })}
            </tbody>
          </Table>
          <PagerRow>
            <Small>Showing 1-70 of 70 countries</Small>
            <Pager aria-label="Table pages">
              <PageButton type="button" disabled $round="3px 0 0 3px">Previous</PageButton>
              <PageButton type="button" $active>1</PageButton>
              <PageButton type="button">2</PageButton>
              <PageButton type="button" $round="0 3px 3px 0">Next</PageButton>
            </Pager>
          </PagerRow>
        </Panel>

        <Panel $after={38}>
          <PanelHead>
            <PanelTitle><Bulb size={20} /> Climate Solutions</PanelTitle>
          </PanelHead>
          <Grid $cols={2}>
            <Card $dark>
              <CardHead $light><Solar size={11} /> Renewable Energy Transition</CardHead>
              <CardBody>
                <p>Shifting to renewable energy sources could reduce global emissions by 65% by 2050.</p>
                <Bullets>
                  <li>Solar energy costs dropped 90% in the last decade</li>
                  <li>Wind power could provide 20% of global electricity by 2030</li>
                  <li>Renewables create 3x more jobs per dollar than fossil fuels</li>
                </Bullets>
              </CardBody>
            </Card>
            <Card $dark>
              <CardHead $light><Tree size={11} /> Forest Conservation</CardHead>
              <CardBody>
                <p>Protecting and restoring forests could remove 5.8 billion tons of CO₂ annually.</p>
                <Bullets>
                  <li>Forests absorb 2.6 billion tons of CO₂ each year</li>
                  <li>Deforestation accounts for 11% of global CO₂ emissions</li>
                  <li>Reforestation could capture 25% of current emissions</li>
                </Bullets>
              </CardBody>
            </Card>
          </Grid>
        </Panel>
      </Container>

      <Footer>
        <FooterGrid>
          <div>
            <Logo>CO<sub>2</sub>CLOCK</Logo>
            <Lead>Real-time atmospheric CO₂ tracker based on simulated NOAA data</Lead>
            <Socials>
              <Social href="#" aria-label="Facebook"><Facebook size={11} /></Social>
              <Social href="#" aria-label="Instagram"><Instagram size={11} /></Social>
              <Social href="#" aria-label="X"><XLogo size={11} /></Social>
              <Social href="#" aria-label="Discord"><Discord size={11} /></Social>
            </Socials>
          </div>
          <div>
            <FooterTitle>Navigation</FooterTitle>
            <FooterLinks>
              {navItems.map((n) => <FooterLink key={n} href="#">{n}</FooterLink>)}
            </FooterLinks>
          </div>
          <div>
            <FooterTitle>About Us</FooterTitle>
            <AboutText>
              We are passionate climate advocates dedicated to raising awareness about CO₂ emissions and their impact on
              our planet. Our mission is to make climate data accessible and understandable for everyone, inspiring
              action for a sustainable future.
            </AboutText>
          </div>
        </FooterGrid>
        <FooterBottom>
          <p>Built by Boney Philip for learning and awareness | © 2025</p>
          <ContactLinks>
            <ContactLink href="#"><Envelope size={11} /> Email</ContactLink>
            <ContactLink href="#"><Github size={11} /> GitHub</ContactLink>
          </ContactLinks>
        </FooterBottom>
      </Footer>
    </Page>
  );
}
